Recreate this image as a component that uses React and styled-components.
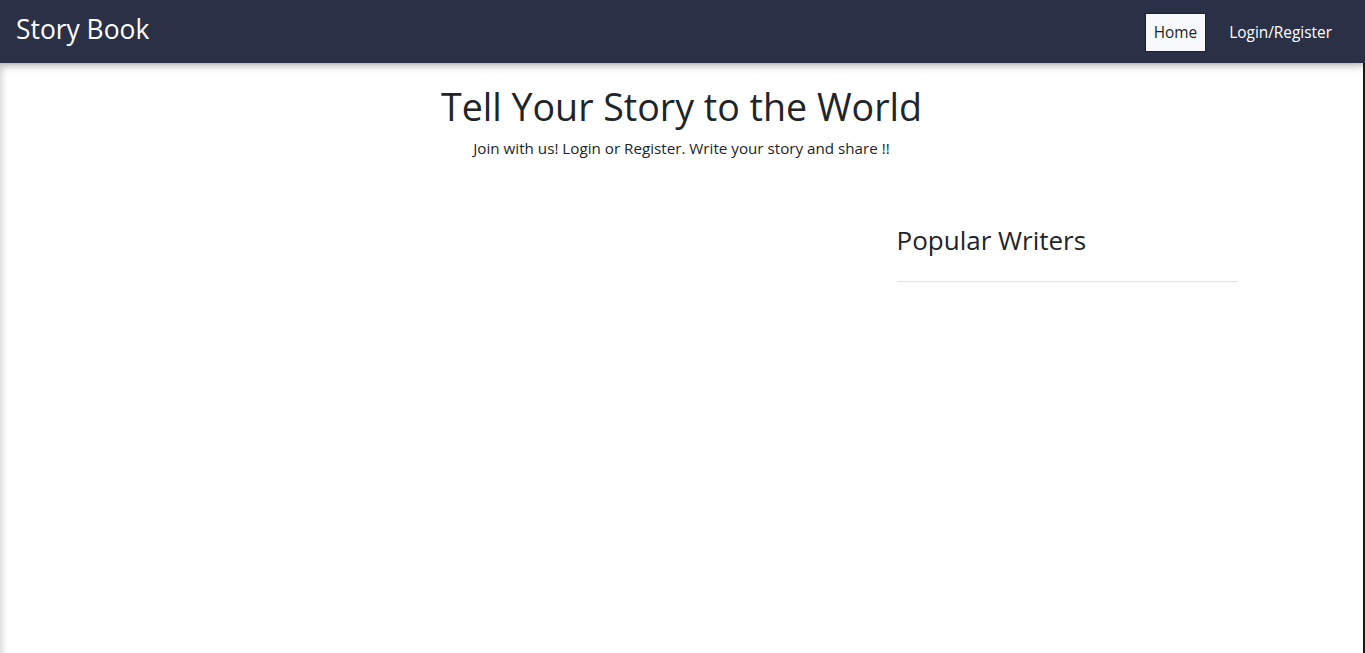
import React from "react";
import styled, { createGlobalStyle } from "styled-components";

const Global = createGlobalStyle`
  html, body { margin: 0; padding: 0; background: #fff; }
  body {
    font-family: "Segoe UI", "Open Sans", "Noto Sans", sans-serif;
    color: #212529;
  }
  * { box-sizing: border-box; }
`;

const Page = styled.div`
  min-height: 653px;
  display: flex;
  flex-direction: column;
  border-right: 2px solid #1a1a1a;
`;

const Navbar = styled.nav`
  height: 63px;
  background: #2a3045;
  display: flex;
  align-items: center;
  justify-content: space-between;
  padding: 0 24px 0 16px;
  position: relative;
  z-index: 2;
  box-shadow: 0 2px 8px rgba(0, 0, 0, 0.35);
  margin-right: -2px;
`;

const Brand = styled.a`
  color: #fff;
  font-size: 26.4px;
  text-decoration: none;
  line-height: 1;
  padding-bottom: 4px;
`;

const NavList = styled.div`
  display: flex;
  align-items: center;
  gap: 14px;
`;

const NavLink = styled.a`
  display: block;
  font-size: 15.4px;
  line-height: 21px;
  padding: 8px 8px;
  text-decoration: none;
  color: ${(p) => (p.$active ? "#212529" : "#fff")};
  background: ${(p) => (p.$active ? "#f8f9fa" : "transparent")};
  border: 1px solid ${(p) => (p.$active ? "#222" : "transparent")};
  margin-top: 1px;
`;

const Main = styled.main`
  flex: 1;
  box-shadow: inset 7px 0 7px -5px rgba(0, 0, 0, 0.18);
`;

const Hero = styled.header`
  text-align: center;
  padding-top: 21px;
`;

const Title = styled.h1`
  font-size: 37.6px;
  font-weight: 400;
  line-height: 46px;
  margin: 0;
`;

const Lead = styled.p`
  font-size: 15.2px;
  margin: 7px 0 0;
  line-height: 22px;
`;

const Container = styled.div`
  width: 1140px;
  margin: 0 auto;
  display: grid;
  grid-template-columns: 1fr 340px;
  padding: 0 15px 0 27px;
`;

const Sidebar = styled.aside`
  padding-top: 64px;
`;

const SideTitle = styled.h3`
  font-size: 26px;
  font-weight: 400;
  line-height: 34px;
  margin: 0 0 24px;
`;

const Rule = styled.hr`
  border: 0;
  border-top: 1px solid #e2e2e2;
  margin: 0;
`;

export default function App() {
  return (
    <Page>
      <Global />
      <Navbar>
        <Brand href="#">Story Book</Brand>
        <NavList>
          <NavLink $active href="#">Home</NavLink>
          <NavLink href="#">Login/Register</NavLink>
        </NavList>
      </Navbar>
      <Main>
        <Hero>
          <Title>Tell Your Story to the World</Title>
          <Lead>Join with us! Login or Register. Write your story and share !!</Lead>
        </Hero>
        <Container>
          <div />
          <Sidebar>
            <SideTitle>Popular Writers</SideTitle>
            <Rule />
          </Sidebar>
        </Container>
      </Main>
    </Page>
  );
}
